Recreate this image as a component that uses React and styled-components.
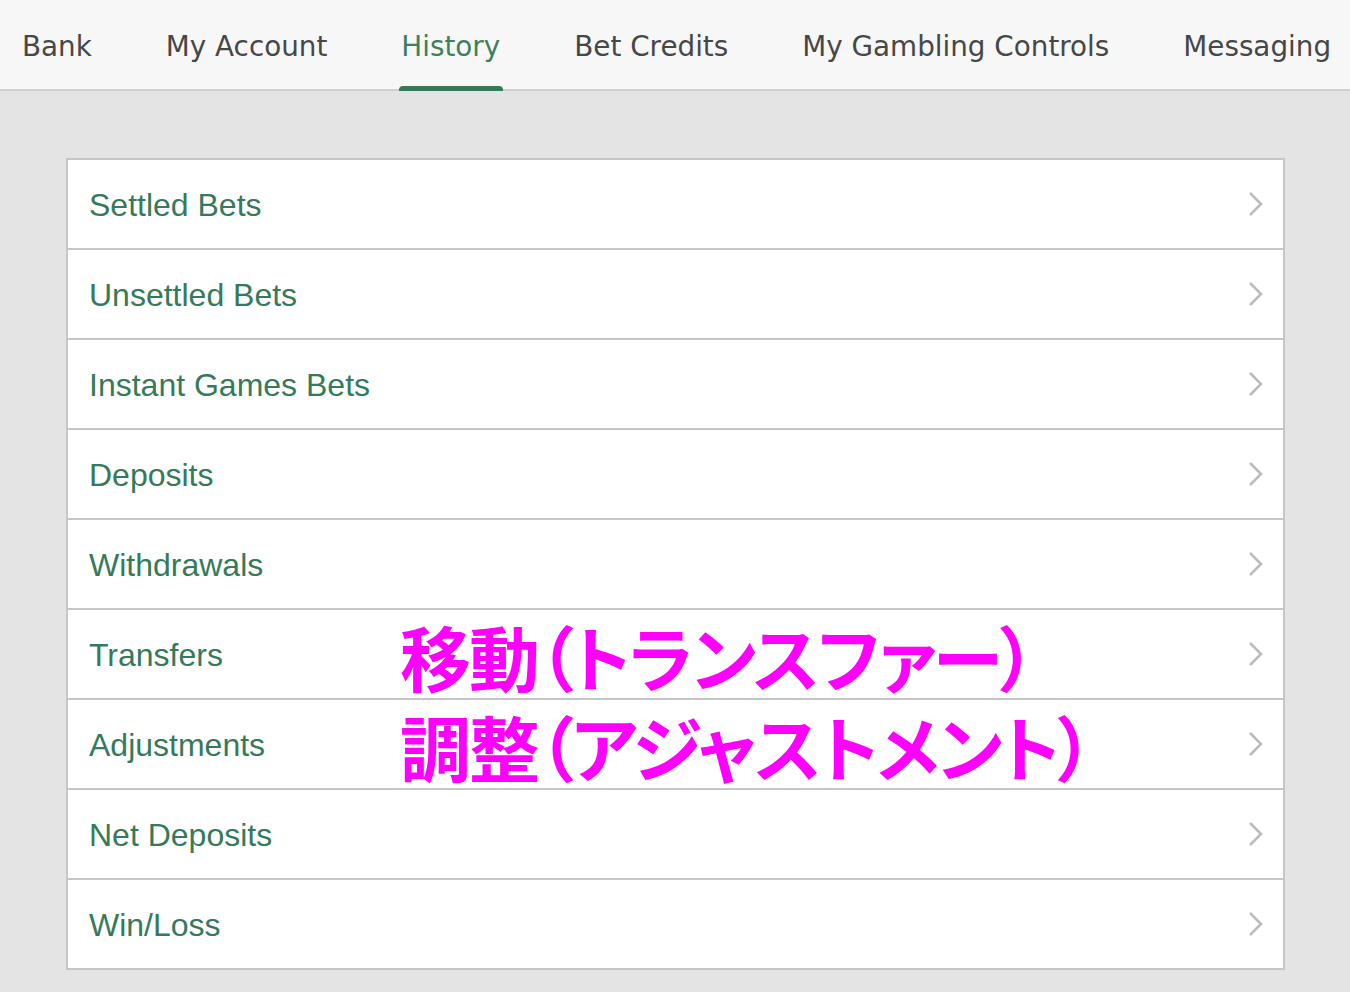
import React from "react";
import styled, { createGlobalStyle } from "styled-components";

const GlobalStyle = createGlobalStyle`
  html, body {
    margin: 0;
    padding: 0;
    background: #e4e4e4;
  }
  body {
    font-family: "Liberation Sans", Arial, sans-serif;
    overflow: hidden;
  }
`;

const Page = styled.div`
  width: 1350px;
  height: 992px;
  background: #e4e4e4;
`;

const TabBar = styled.nav`
  display: flex;
  align-items: stretch;
  gap: 74px;
  height: 89px;
  padding-left: 22px;
  background: #f7f7f7;
  border-bottom: 2px solid #cfcfcf;
  white-space: nowrap;
`;

const Tab = styled.div`
  position: relative;
  display: flex;
  align-items: center;
  padding-top: 4px;
  font-family: "DejaVu Sans", Verdana, sans-serif;
  font-size: 27.8px;
  color: ${(p) => (p.$active ? "#3d8060" : "#474747")};

  &::after {
    content: "";
    display: ${(p) => (p.$active ? "block" : "none")};
    position: absolute;
    left: -2px;
    right: -3px;
    bottom: -2px;
    height: 5px;
    border-radius: 4px 4px 0 0;
    background: #357a59;
  }
`;

const Main = styled.main`
  padding: 67px 0 0 66px;
`;

const Card = styled.ul`
  list-style: none;
  margin: 0;
  padding: 0;
  width: 1215px;
  background: #fff;
  border: 2px solid #c6c6c6;
`;

const Row = styled.li`
  display: flex;
  align-items: center;
  height: 88px;
  padding: 0 20px 0 21px;
  border-top: ${(p) => (p.$first ? "none" : "2px solid #c6c6c6")};
`;

const Label = styled.span`
  flex: 0 0 311px;
  font-size: 32px;
  color: #357a59;
  padding-top: 2px;
`;

const Note = styled.span`
  font-family: "Noto Sans CJK JP", sans-serif;
  font-weight: 700;
  font-size: 71px;
  line-height: 0.9;
  letter-spacing: -2.1px;
  color: #ff00ff;
  font-feature-settings: "palt";
  white-space: nowrap;
  margin-top: 4px;
`;

const Chevron = styled.svg`
  margin-left: auto;
  flex: none;
  width: 15px;
  height: 26px;
`;

const tabs = ["Bank", "My Account", "History", "Bet Credits", "My Gambling Controls", "Messaging"];

const items = [
  { label: "Settled Bets" },
  { label: "Unsettled Bets" },
  { label: "Instant Games Bets" },
  { label: "Deposits" },
  { label: "Withdrawals" },
  { label: "Transfers", note: "移動（トランスファー）" },
  { label: "Adjustments", note: "調整（アジャストメント）" },
  { label: "Net Deposits" },
  { label: "Win/Loss" },
];

function App() {
  return (
    <Page>
      <GlobalStyle />
      <TabBar>
        {tabs.map((t) => (
          <Tab key={t} $active={t === "History"}>{t}</Tab>
        ))}
      </TabBar>
      <Main>
        <Card>
          {items.map((item, i) => (
            <Row key={item.label} $first={i === 0}>
              <Label>{item.label}</Label>
              {item.note && <Note>{item.note}</Note>}
              <Chevron viewBox="0 0 15 26">
                <polyline points="2,2 13,13 2,24" fill="none" stroke="#bcbcbc" strokeWidth="2.6" />
              </Chevron>
            </Row>
          ))}
        </Card>
      </Main>
    </Page>
  );
}

export default App;
